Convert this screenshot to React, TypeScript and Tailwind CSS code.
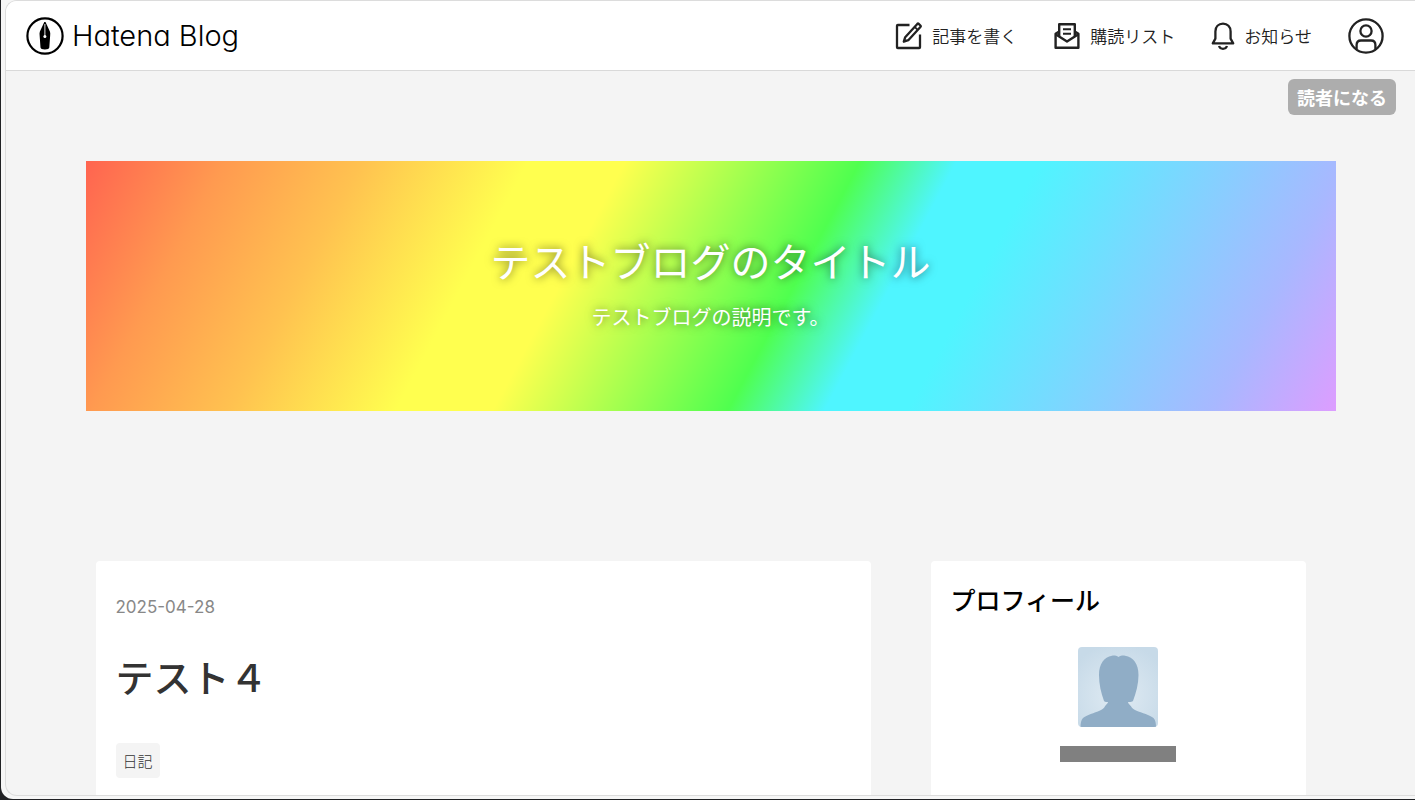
import type { ReactNode } from 'react';

interface NavItem {
  label: string;
  icon: ReactNode;
}

function LogoMark() {
  return (
    <svg width="38" height="38" viewBox="0 0 38 38" aria-hidden="true">
      <circle cx="19" cy="19" r="17.6" fill="none" stroke="#000" strokeWidth="2.2" />
      <path
        d="M18.3 5h1.2l4.4 9.500c.4 1 .5 2.200.3 3.500l-.9 12.500c-.1 1.300-1.700 2-4.400 2s-4.300-.7-4.400-2l-.9-12.500c-.2-1.300-.1-2.500.3-3.500z"
        fill="#000"
      />
      <path d="M18.9 7v12" stroke="#fff" strokeWidth="0.9" />
      <circle cx="18.9" cy="19.5" r="1.5" fill="#fff" />
    </svg>
  );
}

function WriteIcon() {
  return (
    <svg width="28" height="28" viewBox="0 0 28 28" fill="none" stroke="#222" strokeWidth="2.3" strokeLinejoin="round" aria-hidden="true">
      <path d="M14.500 3H2.800a.8.8 0 0 0-.8.8v21.400a.8.8 0 0 0 .8.8h21.400a.8.8 0 0 0 .8-.8V12.500" />
      <path d="M10.200 15.200L22.300 1.900a1 1 0 0 1 1.400 0l1.700 1.600a1 1 0 0 1 0 1.400L13.300 18.200l-4.500 1.500z" strokeWidth="2.3" />
      <path d="M19.600 4.800l3.200 3" strokeWidth="1.800" />
    </svg>
  );
}

function SubscriptionIcon() {
  return (
    <svg width="28" height="28" viewBox="0 0 28 28" fill="none" stroke="#222" strokeWidth="2.4" strokeLinejoin="round" aria-hidden="true">
      <path d="M6.200 14V2.200h15.600V14" />
      <path d="M6.200 9.500L2.600 11.800v14h22.800v-14l-3.600-2.300" />
      <path d="M2.600 12.200L14 19.600l11.400-7.400" />
      <path d="M10 7.200h8M10 11.800h8" strokeWidth="2" />
    </svg>
  );
}

function BellIcon() {
  return (
    <svg width="24" height="28" viewBox="0 0 24 28" fill="none" stroke="#222" strokeWidth="2.3" strokeLinejoin="round" aria-hidden="true">
      <path d="M1.800 21.400h20.400l-2.600-4.800V9.400C19.600 4.800 16.500 1.600 12 1.600S4.400 4.800 4.400 9.400v7.200z" />
      <path d="M8 24c.6 1.800 2.200 2.800 4 2.800s3.400-1 4-2.800" />
    </svg>
  );
}

function UserIcon() {
  return (
    <svg width="36" height="36" viewBox="0 0 36 36" fill="none" stroke="#222" strokeWidth="2.3" aria-hidden="true">
      <circle cx="18" cy="18" r="16.600" />
      <circle cx="18" cy="13" r="5.600" />
      <path d="M8.600 31.500v-4.500c0-3 1.600-4.500 4.400-4.500h10c2.800 0 4.400 1.500 4.400 4.500v4.500" />
    </svg>
  );
}

function Avatar() {
  return (
    <svg width="80" height="80" viewBox="0 0 80 80" className="rounded" role="img" aria-label="プロフィール画像">
      <defs>
        <radialGradient id="avatar-bg" cx="50%" cy="60%" r="65%">
          <stop offset="0" stopColor="#e0ebf3" />
          <stop offset="1" stopColor="#c7dae8" />
        </radialGradient>
      </defs>
      <rect width="80" height="80" fill="url(#avatar-bg)" />
      <path
        d="M40.500 10c2-1.200 4-1.600 6.500-1.300C55.500 10 60.500 17 60.500 28c0 9-2.500 18-5.500 26-1.500 1.200-3 1.200-5 1 0 1.500 1.500 2.200 3 4.200 1 2 2 2.800 5 4.300 6 2.500 14 4.500 17.500 7.500 2 2 2.500 5.500 2.500 9H2.500c0-3.500.5-7 2.500-9 3.500-3 11.500-5 17-7.500 3-1.500 4-2.300 5-4.300 1-2 3-2.700 3-4.200-1.500.2-3 .2-4-1C23 46 21 37 21 28 21 17 26 10 34 8.700c2.500-.3 4.500.1 6.500 1.300z"
        fill="#90adc6"
      />
    </svg>
  );
}

const NAV_ITEMS: NavItem[] = [
  { label: '記事を書く', icon: <WriteIcon /> },
  { label: '購読リスト', icon: <SubscriptionIcon /> },
  { label: 'お知らせ', icon: <BellIcon /> },
];

function Header() {
  return (
    <header className="flex h-[70px] shrink-0 items-center justify-between border-b border-[#d9d9d9] bg-white pr-[31px] pl-5">
      <a href="#" className="flex items-center gap-2">
        <LogoMark />
        <span className="font-['Inter'] text-[29px] leading-8 font-light text-black [font-feature-settings:'cv11']">
          Hatena Blog
        </span>
      </a>
      <nav className="flex items-center gap-9">
        {NAV_ITEMS.map((item) => (
          <a key={item.label} href="#" className="flex items-center gap-[9px] text-[17px] font-[350] text-[#222]">
            {item.icon}
            {item.label}
          </a>
        ))}
        <button type="button" aria-label="アカウント">
          <UserIcon />
        </button>
      </nav>
    </header>
  );
}

function Hero() {
  return (
    <div className="flex h-[250px] flex-col items-center bg-[linear-gradient(118deg,#ff6450_0%,#ff9a50_10%,#ffc250_20%,#ffff4f_32%,#ffff4f_39%,#4fff4f_56%,#4ff5ff_63%,#4ff5ff_69%,#a8b8ff_91%,#dd9dff_100%)] pt-[69px] text-white [text-shadow:0_0_10px_rgba(0,0,0,0.6)]">
      <h1 className="text-[40px] leading-[60px] font-normal">
        <a href="#">テストブログのタイトル</a>
      </h1>
      <p className="mt-3 text-xl leading-[30px] font-normal">テストブログの説明です。</p>
    </div>
  );
}

function Entry() {
  return (
    <article className="flex-1 rounded bg-white px-5 pt-[34px] pb-10">
      <time dateTime="2025-04-28" className="block font-['Inter'] text-[17px] leading-6 text-[#888]">
        2025-04-28
      </time>
      <h2 className="mt-7 text-[38px] leading-[58px] font-medium text-[#333]">
        <a href="#">テスト４</a>
      </h2>
      <a href="#" className="mt-[38px] inline-block rounded bg-[#f4f4f4] px-[7px] py-[6px] text-[15px] leading-[23px] font-light text-[#333]">
        日記
      </a>
    </article>
  );
}

function Profile() {
  return (
    <aside className="w-[375px] shrink-0 rounded bg-white px-5 pt-[18px] pb-10">
      <h2 className="text-[25px] leading-10 font-medium text-black">プロフィール</h2>
      <div className="mt-7 flex flex-col items-center">
        <Avatar />
        <div className="mt-[19px] h-4 w-[116px] bg-[#808080]" />
      </div>
    </aside>
  );
}

export default function App() {
  return (
    <div className="h-screen overflow-hidden bg-[#202124] pb-px pl-px font-['Noto_Sans_CJK_JP',sans-serif]">
      <div className="h-full rounded-bl-xl bg-[#f6f6f6] pb-[3px] pl-1">
        <div className="flex h-full flex-col overflow-hidden rounded-l-xl border-y border-l border-[#dcdcdc] bg-[#f4f4f4]">
          <Header />
          <div className="flex justify-end pt-2 pr-[19px]">
            <button type="button" className="h-9 rounded-md bg-[#adadad] px-[9px] text-[18px] leading-9 font-bold text-white">
              読者になる
            </button>
          </div>
          <div className="mx-auto w-full max-w-[1250px] flex-1 pt-[46px]">
            <Hero />
            <main className="mt-[150px] flex gap-[60px] pr-[30px] pl-[10px]">
              <Entry />
              <Profile />
            </main>
          </div>
        </div>
      </div>
    </div>
  );
}
